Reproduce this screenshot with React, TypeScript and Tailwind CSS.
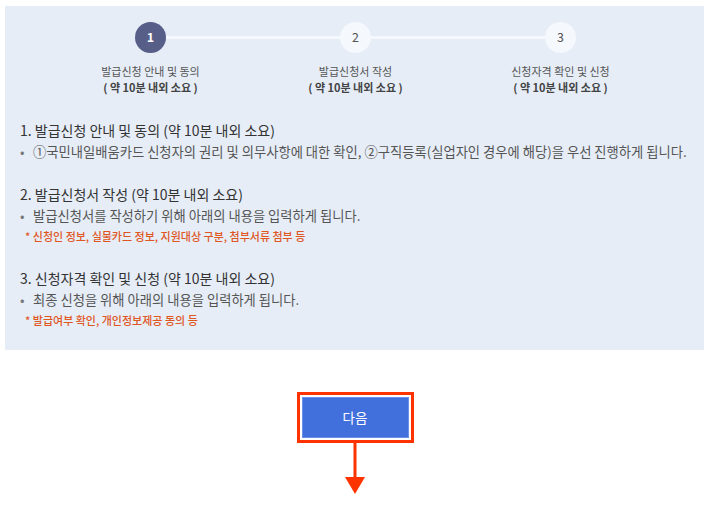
const steps = [
  { no: '1', title: '발급신청 안내 및 동의', active: true },
  { no: '2', title: '발급신청서 작성', active: false },
  { no: '3', title: '신청자격 확인 및 신청', active: false },
];

const sections = [
  {
    title: '1. 발급신청 안내 및 동의 (약 10분 내외 소요)',
    desc: '①국민내일배움카드 신청자의 권리 및 의무사항에 대한 확인, ②구직등록(실업자인 경우에 해당)을 우선 진행하게 됩니다.',
    note: '',
  },
  {
    title: '2. 발급신청서 작성 (약 10분 내외 소요)',
    desc: '발급신청서를 작성하기 위해 아래의 내용을 입력하게 됩니다.',
    note: '* 신청인 정보, 실물카드 정보, 지원대상 구분, 첨부서류 첨부 등',
  },
  {
    title: '3. 신청자격 확인 및 신청 (약 10분 내외 소요)',
    desc: '최종 신청을 위해 아래의 내용을 입력하게 됩니다.',
    note: '* 발급여부 확인, 개인정보제공 동의 등',
  },
];

export default function App() {
  return (
    <div className="w-[710px] h-[516px] bg-white overflow-hidden font-['Noto_Sans_CJK_KR','Noto_Sans',sans-serif]">
      <div className="h-[6px]" />

      <div className="ml-[5px] w-[699px] bg-[#e6edf7] pt-[16px] pb-[20px]">
        {/* stepper */}
        <div className="relative flex pl-[43px]">
          <div className="absolute left-[145px] w-[409px] top-[14px] h-[3px] bg-[#f5f8fc]" />
          {steps.map((s) => (
            <div key={s.no} className="relative w-[205px] flex flex-col items-center">
              <div
                className={`w-[31px] h-[31px] rounded-full flex items-center justify-center text-[12.5px] ${
                  s.active ? 'bg-[#575e88] text-white font-bold' : 'bg-[#f5f8fc] text-[#555]'
                }`}
              >
                {s.no}
              </div>
              <p className="mt-[10px] text-[11px] leading-[16px] text-[#555] whitespace-nowrap">{s.title}</p>
              <p className="text-[11px] leading-[16px] font-bold text-[#444] whitespace-nowrap">( 약 10분 내외 소요 )</p>
            </div>
          ))}
        </div>

        {/* sections */}
        <div className="mt-[24px] pl-[15px] flex flex-col gap-[21px]">
          {sections.map((sec) => (
            <div key={sec.title}>
              <h3 className="text-[14px] leading-[22px] text-[#333] whitespace-nowrap">{sec.title}</h3>
              <p className="text-[13.3px] leading-[21px] text-[#555] whitespace-nowrap">
                <span className="inline-block w-[13px] text-[#777]">•</span>
                {sec.desc}
              </p>
              {sec.note && (
                <p className="pl-[5px] text-[11px] leading-[20px] font-medium text-[#e0561f] whitespace-nowrap">
                  {sec.note}
                </p>
              )}
            </div>
          ))}
        </div>
      </div>

      {/* button */}
      <div className="flex flex-col items-center mt-[42px]">
        <div className="border-[3px] border-[#ff3300] p-[2px]">
          <button className="w-[107px] h-[41px] bg-[#4170dd] border border-[#6a90e8] text-white text-[13.5px]">
            다음
          </button>
        </div>
        <svg width="20" height="52" viewBox="0 0 20 52" className="-mt-px">
          <rect x="8.5" y="0" width="3" height="36" fill="#ff3300" />
          <polygon points="0,35 20,35 10,52" fill="#ff3300" />
        </svg>
      </div>
    </div>
  );
}
